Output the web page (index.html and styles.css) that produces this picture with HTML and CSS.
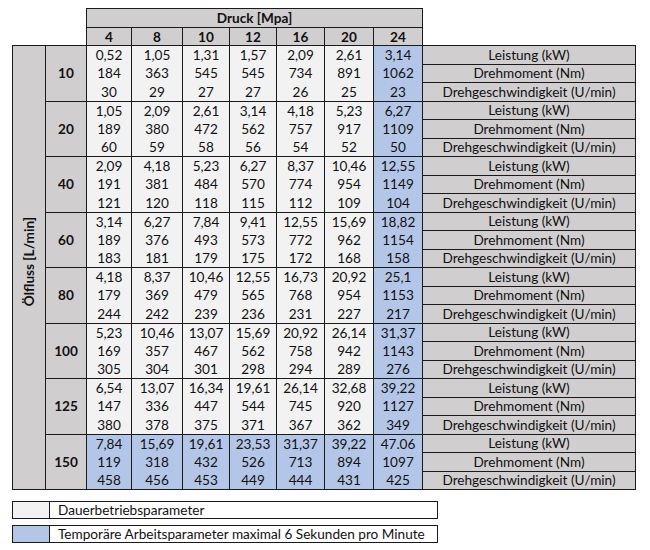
FILE: index.html
```html
<!DOCTYPE html>
<html lang="de">
<head>
<meta charset="utf-8">
<title>Druck / Ölfluss</title>
<link rel="stylesheet" href="styles.css">
</head>
<body>
<div class="page">
<table class="grid">
<colgroup>
<col class="c-flow"><col class="c-val">
<col class="c-d1"><col class="c-d2"><col class="c-d3"><col class="c-d4"><col class="c-d5"><col class="c-d6"><col class="c-d7">
<col class="c-lab">
</colgroup>
<thead>
<tr class="h1"><td colspan="2" class="blank"></td><th colspan="7" class="hd">Druck [Mpa]</th><td class="blank"></td></tr>
<tr class="h2"><td colspan="2" class="blank"></td><th class="hd">4</th><th class="hd">8</th><th class="hd">10</th><th class="hd">12</th><th class="hd">16</th><th class="hd">20</th><th class="hd">24</th><td class="blank"></td></tr>
</thead>
<tbody>
<tr class="r first"><td rowspan="24" class="flow"><span class="vert">Ölfluss [L/min]</span></td><td rowspan="3" class="q">10</td><td class="v">0,52</td><td class="v">1,05</td><td class="v">1,31</td><td class="v">1,57</td><td class="v">2,09</td><td class="v">2,61</td><td class="v b">3,14</td><td class="lab">Leistung (kW)</td></tr>
<tr class="r"><td class="v">184</td><td class="v">363</td><td class="v">545</td><td class="v">545</td><td class="v">734</td><td class="v">891</td><td class="v b">1062</td><td class="lab">Drehmoment (Nm)</td></tr>
<tr class="r"><td class="v">30</td><td class="v">29</td><td class="v">27</td><td class="v">27</td><td class="v">26</td><td class="v">25</td><td class="v b">23</td><td class="lab">Drehgeschwindigkeit (U/min)</td></tr>

<tr class="r first"><td rowspan="3" class="q">20</td><td class="v">1,05</td><td class="v">2,09</td><td class="v">2,61</td><td class="v">3,14</td><td class="v">4,18</td><td class="v">5,23</td><td class="v b">6,27</td><td class="lab">Leistung (kW)</td></tr>
<tr class="r"><td class="v">189</td><td class="v">380</td><td class="v">472</td><td class="v">562</td><td class="v">757</td><td class="v">917</td><td class="v b">1109</td><td class="lab">Drehmoment (Nm)</td></tr>
<tr class="r"><td class="v">60</td><td class="v">59</td><td class="v">58</td><td class="v">56</td><td class="v">54</td><td class="v">52</td><td class="v b">50</td><td class="lab">Drehgeschwindigkeit (U/min)</td></tr>

<tr class="r first"><td rowspan="3" class="q">40</td><td class="v">2,09</td><td class="v">4,18</td><td class="v">5,23</td><td class="v">6,27</td><td class="v">8,37</td><td class="v">10,46</td><td class="v b">12,55</td><td class="lab">Leistung (kW)</td></tr>
<tr class="r"><td class="v">191</td><td class="v">381</td><td class="v">484</td><td class="v">570</td><td class="v">774</td><td class="v">954</td><td class="v b">1149</td><td class="lab">Drehmoment (Nm)</td></tr>
<tr class="r"><td class="v">121</td><td class="v">120</td><td class="v">118</td><td class="v">115</td><td class="v">112</td><td class="v">109</td><td class="v b">104</td><td class="lab">Drehgeschwindigkeit (U/min)</td></tr>

<tr class="r first"><td rowspan="3" class="q">60</td><td class="v">3,14</td><td class="v">6,27</td><td class="v">7,84</td><td class="v">9,41</td><td class="v">12,55</td><td class="v">15,69</td><td class="v b">18,82</td><td class="lab">Leistung (kW)</td></tr>
<tr class="r"><td class="v">189</td><td class="v">376</td><td class="v">493</td><td class="v">573</td><td class="v">772</td><td class="v">962</td><td class="v b">1154</td><td class="lab">Drehmoment (Nm)</td></tr>
<tr class="r"><td class="v">183</td><td class="v">181</td><td class="v">179</td><td class="v">175</td><td class="v">172</td><td class="v">168</td><td class="v b">158</td><td class="lab">Drehgeschwindigkeit (U/min)</td></tr>

<tr class="r first"><td rowspan="3" class="q">80</td><td class="v">4,18</td><td class="v">8,37</td><td class="v">10,46</td><td class="v">12,55</td><td class="v">16,73</td><td class="v">20,92</td><td class="v b">25,1</td><td class="lab">Leistung (kW)</td></tr>
<tr class="r"><td class="v">179</td><td class="v">369</td><td class="v">479</td><td class="v">565</td><td class="v">768</td><td class="v">954</td><td class="v b">1153</td><td class="lab">Drehmoment (Nm)</td></tr>
<tr class="r"><td class="v">244</td><td class="v">242</td><td class="v">239</td><td class="v">236</td><td class="v">231</td><td class="v">227</td><td class="v b">217</td><td class="lab">Drehgeschwindigkeit (U/min)</td></tr>

<tr class="r first"><td rowspan="3" class="q">100</td><td class="v">5,23</td><td class="v">10,46</td><td class="v">13,07</td><td class="v">15,69</td><td class="v">20,92</td><td class="v">26,14</td><td class="v b">31,37</td><td class="lab">Leistung (kW)</td></tr>
<tr class="r"><td class="v">169</td><td class="v">357</td><td class="v">467</td><td class="v">562</td><td class="v">758</td><td class="v">942</td><td class="v b">1143</td><td class="lab">Drehmoment (Nm)</td></tr>
<tr class="r"><td class="v">305</td><td class="v">304</td><td class="v">301</td><td class="v">298</td><td class="v">294</td><td class="v">289</td><td class="v b">276</td><td class="lab">Drehgeschwindigkeit (U/min)</td></tr>

<tr class="r first"><td rowspan="3" class="q">125</td><td class="v">6,54</td><td class="v">13,07</td><td class="v">16,34</td><td class="v">19,61</td><td class="v">26,14</td><td class="v">32,68</td><td class="v b">39,22</td><td class="lab">Leistung (kW)</td></tr>
<tr class="r"><td class="v">147</td><td class="v">336</td><td class="v">447</td><td class="v">544</td><td class="v">745</td><td class="v">920</td><td class="v b">1127</td><td class="lab">Drehmoment (Nm)</td></tr>
<tr class="r"><td class="v">380</td><td class="v">378</td><td class="v">375</td><td class="v">371</td><td class="v">367</td><td class="v">362</td><td class="v b">349</td><td class="lab">Drehgeschwindigkeit (U/min)</td></tr>

<tr class="r first"><td rowspan="3" class="q">150</td><td class="v b">7,84</td><td class="v b">15,69</td><td class="v b">19,61</td><td class="v b">23,53</td><td class="v b">31,37</td><td class="v b">39,22</td><td class="v b">47.06</td><td class="lab">Leistung (kW)</td></tr>
<tr class="r"><td class="v b">119</td><td class="v b">318</td><td class="v b">432</td><td class="v b">526</td><td class="v b">713</td><td class="v b">894</td><td class="v b">1097</td><td class="lab">Drehmoment (Nm)</td></tr>
<tr class="r last"><td class="v b">458</td><td class="v b">456</td><td class="v b">453</td><td class="v b">449</td><td class="v b">444</td><td class="v b">431</td><td class="v b">425</td><td class="lab">Drehgeschwindigkeit (U/min)</td></tr>
</tbody>
</table>

<div class="legend">
  <div class="legend-item"><span class="swatch sw-grey"></span><span class="legend-text">Dauerbetriebsparameter</span></div>
  <div class="legend-item"><span class="swatch sw-blue"></span><span class="legend-text">Temporäre Arbeitsparameter maximal 6 Sekunden pro Minute</span></div>
</div>
</div>
</body>
</html>
```
FILE: styles.css
```css
html, body {
  margin: 0;
  padding: 0;
  background: #ffffff;
}
body {
  font-family: Lato, "Liberation Sans", sans-serif;
  font-size: 13.6px;
  color: #111111;
}
.page {
  padding: 8px 0 0 12px;
}
.grid {
  border-collapse: collapse;
  table-layout: fixed;
  width: 623px;
}
.c-flow { width: 33px; }
.c-val { width: 41px; }
.c-d1 { width: 45px; }
.c-d2 { width: 51px; }
.c-d3 { width: 47px; }
.c-d4 { width: 47px; }
.c-d5 { width: 48px; }
.c-d6 { width: 49px; }
.c-d7 { width: 49px; }
.c-lab { width: 213px; }

.grid td, .grid th {
  padding: 0;
  text-align: center;
  vertical-align: middle;
  line-height: 16px;
  white-space: nowrap;
  overflow: hidden;
}
.blank { border: none; }
.hd {
  background: #d0cece;
  border: 1px solid #1a1a1a;
  font-weight: bold;
}
.h1 th, .h1 td { height: 18px; }
.h2 th, .h2 td { height: 17px; }

.r td { height: 17.5px; }
.v {
  background: #f2f2f2;
  border-left: 1px solid #1a1a1a;
  border-right: 1px solid #1a1a1a;
}
.v.b { background: #b4c6e7; }
.first .v { border-top: 1px solid #1a1a1a; }
.last .v { border-bottom: 1px solid #1a1a1a; }

.grid td.flow {
  background: #d0cece;
  border: 1px solid #1a1a1a;
  padding-bottom: 8px;
}
.vert {
  display: inline-block;
  writing-mode: vertical-rl;
  transform: rotate(180deg);
  font-weight: bold;
  white-space: nowrap;
  line-height: 16px;
}
.q {
  background: #d0cece;
  border: 1px solid #1a1a1a;
  font-weight: bold;
}
.lab {
  background: #d0cece;
  border: 1px solid #1a1a1a;
}

.legend {
  display: flex;
  flex-direction: column;
  gap: 6px;
  margin-top: 11px;
  width: 426px;
}
.legend-item {
  display: flex;
  height: 18px;
  border: 1px solid #1a1a1a;
  box-sizing: border-box;
}
.swatch {
  width: 36px;
  border-right: 1px solid #1a1a1a;
}
.sw-grey { background: #f2f2f2; }
.sw-blue { background: #b4c6e7; }
.legend-text {
  padding-left: 8px;
  line-height: 16px;
}
```
